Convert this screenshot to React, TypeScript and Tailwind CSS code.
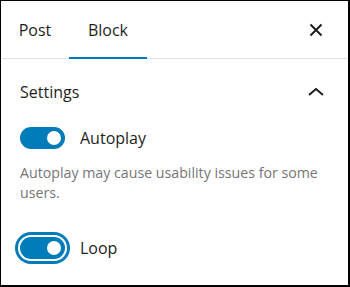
import { useState } from "react";

function Toggle({ on, focused }: { on: boolean; focused?: boolean }) {
  return (
    <span
      className={`flex h-[22px] w-[45px] shrink-0 items-center rounded-full bg-[#007cba] px-[4px] ${
        on ? "justify-end" : "justify-start"
      } ${focused ? "ring-[3px] ring-[#007cba] ring-offset-2 ring-offset-white" : ""}`}
    >
      <span className="h-[14px] w-[14px] rounded-full bg-white" />
    </span>
  );
}

export default function App() {
  const [tab, setTab] = useState<"post" | "block">("block");

  return (
    <div className="h-[287px] w-[350px] border-t border-l border-r-2 border-b-2 border-black bg-white font-['Open_Sans',sans-serif] text-[#1e1e1e]">
      <div className="flex h-[58px] items-stretch border-b border-[#e0e0e0]">
        <button
          onClick={() => setTab("post")}
          className="relative flex w-[68px] items-center justify-center pt-[1px] text-[16px]"
        >
          Post
          {tab === "post" && <span className="absolute right-0 bottom-[-1px] left-0 h-[2px] bg-[#007cba]" />}
        </button>
        <button
          onClick={() => setTab("block")}
          className="relative flex w-[78px] items-center justify-center pt-[1px] text-[16px]"
        >
          Block
          {tab === "block" && <span className="absolute right-0 bottom-[-1px] left-0 h-[2px] bg-[#007cba]" />}
        </button>
        <button className="mr-[20px] ml-auto flex w-[24px] items-center justify-center">
          <svg width="14" height="14" viewBox="0 0 14 14" fill="none" stroke="#1e1e1e" strokeWidth="2">
            <path d="M1.5 1.5l11 11M12.5 1.5l-11 11" />
          </svg>
        </button>
      </div>

      <div className="px-[19px]">
        <button className="flex h-[66px] w-full items-center justify-between text-[16px] font-medium">
          Settings
          <svg className="mr-[5px]" width="16" height="8" viewBox="0 0 16 8" fill="none" stroke="#1e1e1e" strokeWidth="2">
            <path d="M1 7l7-6 7 6" />
          </svg>
        </button>

        <label className="flex h-[26px] items-center gap-[15px] text-[16px]">
          <Toggle on />
          Autoplay
        </label>
        <p className="mt-[12px] text-[14.2px] leading-[20px] text-[#757575]">
          Autoplay may cause usability issues for some users.
        </p>

        <label className="mt-[32px] flex h-[26px] items-center gap-[15px] text-[16px]">
          <Toggle on focused />
          Loop
        </label>
      </div>
    </div>
  );
}
